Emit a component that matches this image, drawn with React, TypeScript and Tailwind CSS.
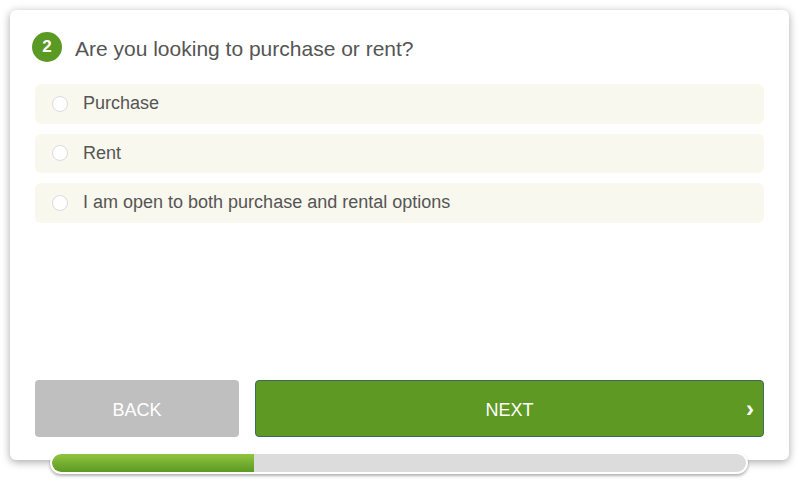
import React from 'react';

const OPTIONS = ['Purchase', 'Rent', 'I am open to both purchase and rental options'];

export default function App() {
  return (
    <div className="w-[800px] h-[485px] bg-white pt-[10px] pl-[10px]" style={{ fontFamily: '"Liberation Sans", Arial, sans-serif' }}>
      <div className="relative w-[779px] h-[450px] bg-white rounded-[6px] shadow-[0_2px_8px_rgba(0,0,0,0.35)] flex flex-col px-[25px] pt-[22px] pb-[23px]">
        {/* Question header */}
        <div className="flex items-center gap-[13px] -ml-[3px]">
          <div className="w-[30px] h-[30px] rounded-full bg-[#5a9a24] text-white text-[17px] font-bold flex items-center justify-center">2</div>
          <h2 className="text-[21px] text-[#555] leading-none pt-[3px]">Are you looking to purchase or rent?</h2>
        </div>

        {/* Options */}
        <div className="mt-[22px] flex flex-col gap-[10px]">
          {OPTIONS.map(label => (
            <label key={label} className="h-[39.5px] bg-[#f9f8ee] rounded-[6px] flex items-center pl-[17px] gap-[15px] cursor-pointer">
              <span className="w-[16px] h-[16px] rounded-full bg-white border border-[#dcdcdc] shrink-0" />
              <span className="text-[18px] text-[#555]">{label}</span>
            </label>
          ))}
        </div>

        {/* Navigation */}
        <div className="mt-auto flex gap-[16px]">
          <button className="w-[204px] h-[57px] pt-[3px] rounded-[4px] bg-[#bfbfbf] text-white text-[18px]">BACK</button>
          <button className="relative flex-1 h-[57px] pt-[3px] rounded-[4px] bg-[#5e9923] border border-[#3e6b5c] text-white text-[18px]">
            NEXT
            <span className="absolute right-[9px] top-1/2 -translate-y-1/2 text-[24px] font-bold leading-none">›</span>
          </button>
        </div>
      </div>

      {/* Progress */}
      <div className="-mt-[8px] ml-[40px] w-[698px] h-[22px] rounded-full border-2 border-white bg-[#dcdcdc] shadow-[0_2px_3px_rgba(0,0,0,0.3)] overflow-hidden relative">
        <div className="h-full w-[202px] bg-gradient-to-b from-[#91c53f] to-[#5b9a22] rounded-l-full" />
      </div>
    </div>
  );
}
